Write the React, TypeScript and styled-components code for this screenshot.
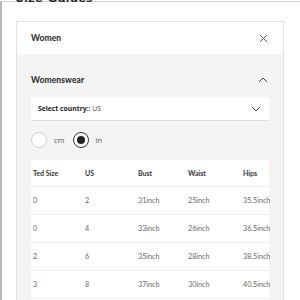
import React from 'react';
import styled, { createGlobalStyle } from 'styled-components';

const GlobalStyle = createGlobalStyle`
    html, body {
        margin: 0;
        padding: 0;
        background: #fff;
        overflow: hidden;
    }
    body {
        font-family: Lato, "Open Sans", sans-serif;
        color: #333;
    }
`;

type Row = {
    ted: string,
    us: string,
    bust: string,
    waist: string,
    hips: string
}

const rows: Row[] = [
    { ted: '0', us: '2', bust: '31inch', waist: '25inch', hips: '35.5inch' },
    { ted: '0', us: '4', bust: '33inch', waist: '26inch', hips: '36.5inch' },
    { ted: '2', us: '6', bust: '35inch', waist: '28inch', hips: '38.5inch' },
    { ted: '3', us: '8', bust: '37inch', waist: '30inch', hips: '40.5inch' },
    { ted: '4', us: '10', bust: '39inch', waist: '32inch', hips: '42.5inch' },
];

const columns = [
    { label: 'Ted Size', width: 52 },
    { label: 'US', width: 53 },
    { label: 'Bust', width: 50 },
    { label: 'Waist', width: 55 },
    { label: 'Hips', width: 28 },
];

function CloseIcon() {
    return (
        <svg width="9" height="9" viewBox="0 0 9 9">
            <path d="M1 1 L8 8 M8 1 L1 8" stroke="#555" strokeWidth="1" fill="none" />
        </svg>
    );
}

function Chevron({ up }: { up?: boolean }) {
    return (
        <svg width="10" height="6" viewBox="0 0 10 6">
            <path d={up ? 'M1 5 L5 1 L9 5' : 'M1 1 L5 5 L9 1'} stroke="#333" strokeWidth="1" fill="none" />
        </svg>
    );
}

function App() {
    return (
        <>
            <GlobalStyle />
            <Frame>
                <Heading>Size Guides</Heading>
                <Card>
                    <CardHeader>
                        <Title>Women</Title>
                        <CloseIcon />
                    </CardHeader>
                    <Section>
                        <SectionHead>
                            <Title>Womenswear</Title>
                            <Chevron up />
                        </SectionHead>
                        <Select>
                            <span><strong>Select country::</strong> US</span>
                            <Chevron />
                        </Select>
                        <Units>
                            <Radio />
                            <UnitLabel>cm</UnitLabel>
                            <Radio checked />
                            <UnitLabel>in</UnitLabel>
                        </Units>
                        <Table>
                            <colgroup>
                                {columns.map(c => <col key={c.label} style={{ width: c.width }} />)}
                            </colgroup>
                            <thead>
                                <tr>
                                    {columns.map(c => <Th key={c.label}>{c.label}</Th>)}
                                </tr>
                            </thead>
                            <tbody>
                                {rows.map((r, i) => (
                                    <tr key={i}>
                                        <Td>{r.ted}</Td>
                                        <Td>{r.us}</Td>
                                        <Td>{r.bust}</Td>
                                        <Td>{r.waist}</Td>
                                        <Td>{r.hips}</Td>
                                    </tr>
                                ))}
                            </tbody>
                        </Table>
                    </Section>
                </Card>
            </Frame>
        </>
    );
}

const Frame = styled.div`
    margin-top: 1px;
    height: 320px;
    border-left: 2px solid #b8b8b8;
    border-top: 1px solid #d0d0d0;
    padding: 0 14px;
`;

const Heading = styled.h2`
    margin: -12px 0 0 0;
    height: 31px;
    font-size: 14px;
    line-height: 14px;
    font-weight: 700;
    letter-spacing: 0.5px;
    color: #222;
`;

const Card = styled.div`
    width: 266px;
    border: 1px solid #e2e2e2;
    background: #f4f4f4;
`;

const CardHeader = styled.div`
    height: 32px;
    padding: 0 15px 0 14px;
    background: #fff;
    display: flex;
    align-items: center;
    justify-content: space-between;
`;

const Title = styled.span`
    font-size: 8.5px;
    font-weight: 700;
    letter-spacing: 0.1px;
    color: #222;
`;

const Section = styled.div`
    padding: 0 14px;
`;

const SectionHead = styled.div`
    height: 43px;
    padding: 9px 1px 0 0;
    box-sizing: border-box;
    display: flex;
    align-items: center;
    justify-content: space-between;
`;

const Select = styled.div`
    height: 24px;
    box-sizing: border-box;
    padding: 0 8px 0 7px;
    background: #fff;
    border-bottom: 1px solid #dcdcdc;
    display: flex;
    align-items: center;
    justify-content: space-between;
    font-family: "Open Sans", sans-serif;
    font-size: 6.8px;
    color: #444;
    strong {
        font-weight: 700;
        color: #222;
    }
`;

const Units = styled.div`
    display: flex;
    align-items: center;
    margin: 11px 0 12px;
    height: 16px;
`;

const Radio = styled.span<{ checked?: boolean }>`
    width: 16px;
    height: 16px;
    box-sizing: border-box;
    border-radius: 50%;
    background: #fff;
    border: 1px solid ${props => props.checked ? '#333' : '#d4d4d4'};
    display: flex;
    align-items: center;
    justify-content: center;
    &::after {
        content: '';
        display: ${props => props.checked ? 'block' : 'none'};
        width: 8px;
        height: 8px;
        border-radius: 50%;
        background: #222;
    }
`;

const UnitLabel = styled.span`
    font-family: "Open Sans", sans-serif;
    font-size: 7.5px;
    color: #555;
    margin: 0 8px 0 7px;
`;

const Table = styled.table`
    width: 238px;
    background: #fff;
    border-collapse: collapse;
    table-layout: fixed;
`;

const Th = styled.th`
    height: 26px;
    box-sizing: border-box;
    padding: 0 0 0 2px;
    text-align: left;
    font-size: 7px;
    font-weight: 700;
    color: #333;
    white-space: nowrap;
    border-bottom: 1px solid #ececec;
`;

const Td = styled.td`
    height: 28px;
    box-sizing: border-box;
    padding: 0 0 0 2px;
    font-size: 7.2px;
    color: #666;
    white-space: nowrap;
    border-bottom: 1px solid #ececec;
`;

export default App;
